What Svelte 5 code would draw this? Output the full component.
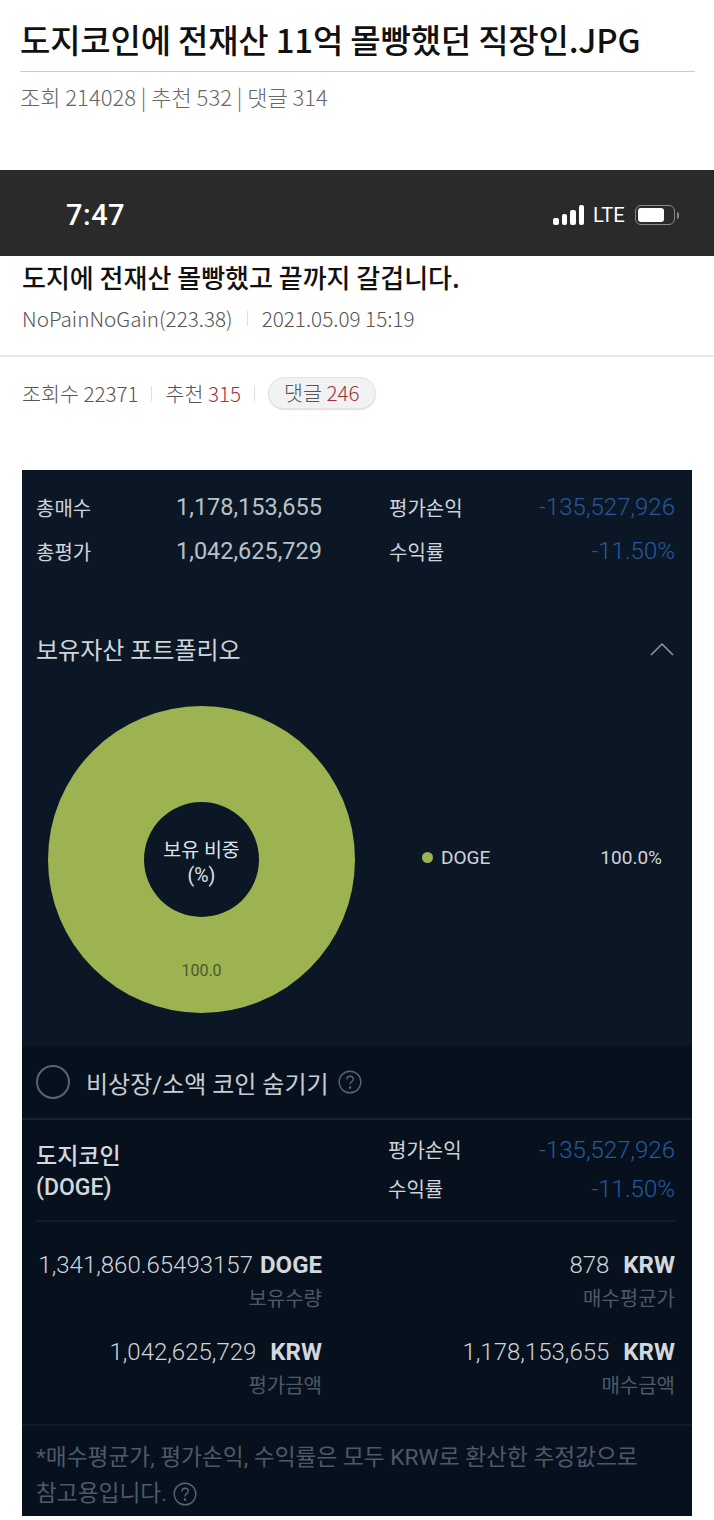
<script>
	const summary = [
		{ label: "총매수", value: "1,178,153,655", pnlLabel: "평가손익", pnl: "-135,527,926" },
		{ label: "총평가", value: "1,042,625,729", pnlLabel: "수익률", pnl: "-11.50%" },
	];

	const details = [
		{ amount: "1,341,860.65493157", unit: "DOGE", label: "보유수량", gap: false },
		{ amount: "878", unit: "KRW", label: "매수평균가", gap: true },
		{ amount: "1,042,625,729", unit: "KRW", label: "평가금액", gap: true },
		{ amount: "1,178,153,655", unit: "KRW", label: "매수금액", gap: true },
	];
</script>

{#snippet help(size)}
	<svg class="help" width={size} height={size} viewBox="0 0 24 24" fill="none" stroke="currentColor" stroke-width="1.4">
		<circle cx="12" cy="12" r="10.8" />
		<path d="M8.8 9.4c0-2 1.5-3.2 3.3-3.2s3.2 1.2 3.2 2.9c0 1.4-.8 2.1-1.8 2.8-1 .7-1.4 1.3-1.4 2.5" />
		<circle cx="12.1" cy="17.6" r=".6" fill="currentColor" />
	</svg>
{/snippet}

<main class="page">
	<header class="post-head">
		<h1>도지코인에 전재산 11억 몰빵했던 직장인.JPG</h1>
		<p class="post-meta">조회 214028 | 추천 532 | 댓글 314</p>
	</header>

	<div class="status-bar">
		<span class="clock">7:47</span>
		<div class="status-icons">
			<span class="signal"><i></i><i></i><i></i><i></i></span>
			<span class="lte">LTE</span>
			<span class="battery"><b></b></span>
			<span class="battery-cap"></span>
		</div>
	</div>

	<section class="thread">
		<h2>도지에 전재산 몰빵했고 끝까지 갈겁니다.</h2>
		<div class="byline">
			<span>NoPainNoGain(223.38)</span>
			<i class="sep"></i>
			<span>2021.05.09 15:19</span>
		</div>
	</section>

	<div class="counts">
		<span>조회수 22371</span>
		<i class="sep"></i>
		<span>추천 <em>315</em></span>
		<i class="sep"></i>
		<span class="pill">댓글 <em>246</em></span>
	</div>

	<section class="wallet">
		<div class="summary">
			{#each summary as row (row.label)}
				<div class="summary-row">
					<span class="summary-label">{row.label}</span>
					<span class="summary-value">{row.value}</span>
					<span class="summary-pnl-label">{row.pnlLabel}</span>
					<span class="loss">{row.pnl}</span>
				</div>
			{/each}
		</div>

		<div class="portfolio-head">
			<h3>보유자산 포트폴리오</h3>
			<svg width="26" height="16" viewBox="0 0 26 16" fill="none" stroke="#8f98a3" stroke-width="1.5">
				<path d="M2 14 13 3l11 11" />
			</svg>
		</div>

		<div class="chart-row">
			<div class="donut">
				<div class="donut-hole">보유 비중<br />(%)</div>
				<span class="donut-value">100.0</span>
			</div>
			<div class="legend">
				<span class="dot"></span>
				<span class="legend-name">DOGE</span>
				<span class="legend-share">100.0%</span>
			</div>
		</div>

		<div class="hide-row">
			<span class="radio"></span>
			<span>비상장/소액 코인 숨기기</span>
			{@render help(24)}
		</div>

		<div class="coin">
			<div class="coin-head">
				<div class="coin-name">도지코인<br />(DOGE)</div>
				<div class="coin-pnl">
					<div><span>평가손익</span><span class="loss">-135,527,926</span></div>
					<div><span>수익률</span><span class="loss">-11.50%</span></div>
				</div>
			</div>
			<div class="detail-grid">
				{#each details as item (item.label)}
					<div class="detail">
						<div class="detail-amount">{item.amount}<b class:wide={item.gap}>{item.unit}</b></div>
						<div class="detail-label">{item.label}</div>
					</div>
				{/each}
			</div>
		</div>

		<p class="note">*매수평균가, 평가손익, 수익률은 모두 KRW로 환산한 추정값으로<br />참고용입니다. {@render help(24)}</p>
	</section>
</main>

<style>
	:global(body) {
		background: #fff;
	}

	.page {
		width: 714px;
		height: 1520px;
		overflow: hidden;
		font-family: "Noto Sans CJK KR", "Noto Sans", sans-serif;
		color: #111;
	}

	h1,
	h2,
	h3,
	p {
		margin: 0;
	}

	.post-head {
		height: 170px;
		padding: 0 19px 0 20px;
		box-sizing: border-box;
	}

	h1 {
		height: 71px;
		font-size: 33px;
		font-weight: 500;
		line-height: 78px;
		letter-spacing: -0.2px;
		border-bottom: 1px solid #ccc;
		white-space: nowrap;
	}

	.post-meta {
		margin-top: 9px;
		font-size: 22px;
		font-weight: 300;
		line-height: 30px;
		color: #666;
		white-space: nowrap;
	}

	.status-bar {
		display: flex;
		justify-content: space-between;
		align-items: center;
		height: 86px;
		box-sizing: border-box;
		padding: 4px 35px 0 66px;
		background: #2a2a2a;
		color: #fff;
	}

	.clock {
		font-family: Roboto, sans-serif;
		font-size: 29px;
		font-weight: 500;
		letter-spacing: 0.5px;
	}

	.status-icons {
		display: flex;
		align-items: center;
	}

	.signal {
		display: flex;
		align-items: flex-end;
		gap: 3px;
		height: 20px;
		margin-right: 9px;
	}

	.signal i {
		width: 5.5px;
		border-radius: 2px;
		background: #fff;
	}

	.signal i:nth-child(1) { height: 7px; }
	.signal i:nth-child(2) { height: 11px; }
	.signal i:nth-child(3) { height: 15px; }
	.signal i:nth-child(4) { height: 20px; }

	.lte {
		width: 33px;
		margin-right: 9px;
		font-family: Roboto, sans-serif;
		font-size: 21px;
		line-height: 24px;
		transform: scaleX(0.96);
		transform-origin: left;
	}

	.battery {
		display: flex;
		width: 40px;
		height: 20px;
		box-sizing: border-box;
		padding: 2px;
		border: 1.5px solid #8a8a8a;
		border-radius: 6px;
	}

	.battery b {
		width: 26px;
		border-radius: 3px;
		background: #fff;
	}

	.battery-cap {
		width: 2px;
		height: 7px;
		margin-left: 2px;
		border-radius: 0 2px 2px 0;
		background: #8a8a8a;
	}

	.thread {
		height: 99px;
		padding: 0 22px;
		border-bottom: 2px solid #e8e8e8;
	}

	h2 {
		padding-top: 2px;
		font-size: 26px;
		font-weight: 500;
		line-height: 37px;
		white-space: nowrap;
	}

	.byline {
		display: flex;
		align-items: center;
		gap: 14px;
		margin-top: 9px;
		font-size: 20.7px;
		font-weight: 300;
		line-height: 28px;
		color: #555;
		white-space: nowrap;
	}

	.sep {
		width: 1px;
		height: 15px;
		background: #ddd;
	}

	.counts {
		display: flex;
		align-items: center;
		gap: 13px;
		height: 76px;
		box-sizing: border-box;
		padding: 0 22px 4px;
		font-size: 20.6px;
		font-weight: 300;
		color: #555;
		white-space: nowrap;
	}

	.counts em {
		font-style: normal;
		color: #a2303a;
	}

	.pill {
		height: 32px;
		box-sizing: border-box;
		padding: 0 15px;
		line-height: 29px;
		border: 1px solid #e4e4e4;
		border-radius: 16px;
		background: #f2f2f2;
		box-shadow: 0 1px 1px #ddd;
	}

	.wallet {
		height: 1046px;
		margin: 37px 22px 0;
		background: #0c1726;
		color: #cfd4da;
		font-family: Roboto, "Noto Sans CJK KR", sans-serif;
	}

	.summary {
		height: 112px;
		box-sizing: border-box;
		padding: 15px 17px 0 14px;
	}

	.summary-row {
		display: grid;
		grid-template-columns: 140px 146px 66px 1fr;
		align-items: center;
		height: 44px;
		font-size: 20px;
	}

	.summary-value {
		font-size: 23.5px;
		text-align: right;
		white-space: nowrap;
		color: #b9c0c8;
	}

	.summary-pnl-label {
		margin-left: 67px;
		white-space: nowrap;
	}

	.summary-row > :last-child {
		text-align: right;
	}

	.loss {
		font-size: 24px;
		font-weight: 300;
		color: #24599f;
		white-space: nowrap;
	}

	.portfolio-head {
		display: flex;
		justify-content: space-between;
		align-items: center;
		height: 45px;
		margin-top: 44px;
		padding: 0 17px 0 14px;
	}

	h3 {
		font-size: 24px;
		font-weight: 400;
	}

	.chart-row {
		display: flex;
		align-items: center;
		height: 375px;
		box-sizing: border-box;
		padding: 2px 30px 0 26px;
	}

	.donut {
		position: relative;
		display: flex;
		align-items: center;
		justify-content: center;
		flex: none;
		width: 307px;
		height: 307px;
		border-radius: 50%;
		background: #9db250;
	}

	.donut-hole {
		display: flex;
		align-items: center;
		justify-content: center;
		width: 115px;
		height: 115px;
		box-sizing: border-box;
		padding-top: 6px;
		border-radius: 50%;
		background: #0c1726;
		font-size: 19.5px;
		line-height: 25px;
		text-align: center;
		color: #dfe3e6;
	}

	.donut-value {
		position: absolute;
		left: 0;
		right: 0;
		bottom: 33px;
		font-size: 16px;
		text-align: center;
		color: #4a5a2e;
	}

	.legend {
		display: flex;
		align-items: center;
		flex: 1;
		margin: -5px 0 0 67px;
		font-size: 19px;
	}

	.dot {
		width: 11px;
		height: 11px;
		margin-right: 8px;
		border-radius: 50%;
		background: #9db250;
	}

	.legend-share {
		margin-left: auto;
	}

	.hide-row {
		display: flex;
		align-items: center;
		gap: 16px;
		height: 74px;
		box-sizing: border-box;
		padding: 0 14px;
		background: #07111e;
		border-bottom: 2px solid #172130;
		font-size: 24px;
		color: #c8cdd3;
	}

	.radio {
		width: 34px;
		height: 34px;
		box-sizing: border-box;
		border: 2px solid #5a6470;
		border-radius: 50%;
	}

	.help {
		margin-left: -7px;
		color: #5a6470;
		vertical-align: -5px;
	}

	.note .help {
		margin-left: 0;
	}

	.coin {
		height: 304px;
		padding: 0 17px 0 14px;
		background: #07111e;
	}

	.coin-head {
		display: flex;
		justify-content: space-between;
		height: 102px;
		box-sizing: border-box;
		padding-top: 10px;
		border-bottom: 2px solid #111b29;
	}

	.coin-name {
		padding-top: 11px;
		font-size: 23px;
		font-weight: 500;
		line-height: 31px;
		color: #d3d8dd;
	}

	.coin-pnl {
		width: 287px;
		font-size: 20px;
	}

	.coin-pnl div {
		display: flex;
		justify-content: space-between;
		align-items: center;
		height: 39px;
	}

	.detail-grid {
		display: grid;
		grid-template-columns: 286px 1fr;
		row-gap: 18px;
		padding-top: 23px;
		text-align: right;
	}

	.detail-amount {
		font-size: 24px;
		font-weight: 300;
		line-height: 40px;
		white-space: nowrap;
	}

	.detail-amount b {
		margin-left: 7px;
		font-weight: 700;
		color: #d3d8dd;
	}

	.detail-amount b.wide {
		margin-left: 14px;
	}

	.detail-label {
		font-size: 20px;
		line-height: 29px;
		color: #4e5966;
	}

	.note {
		height: 92px;
		box-sizing: border-box;
		padding: 14px 0 0 14px;
		border-top: 2px solid #111b29;
		background: #07111e;
		font-size: 22.7px;
		line-height: 36px;
		color: #4e5966;
		white-space: nowrap;
	}
</style>
